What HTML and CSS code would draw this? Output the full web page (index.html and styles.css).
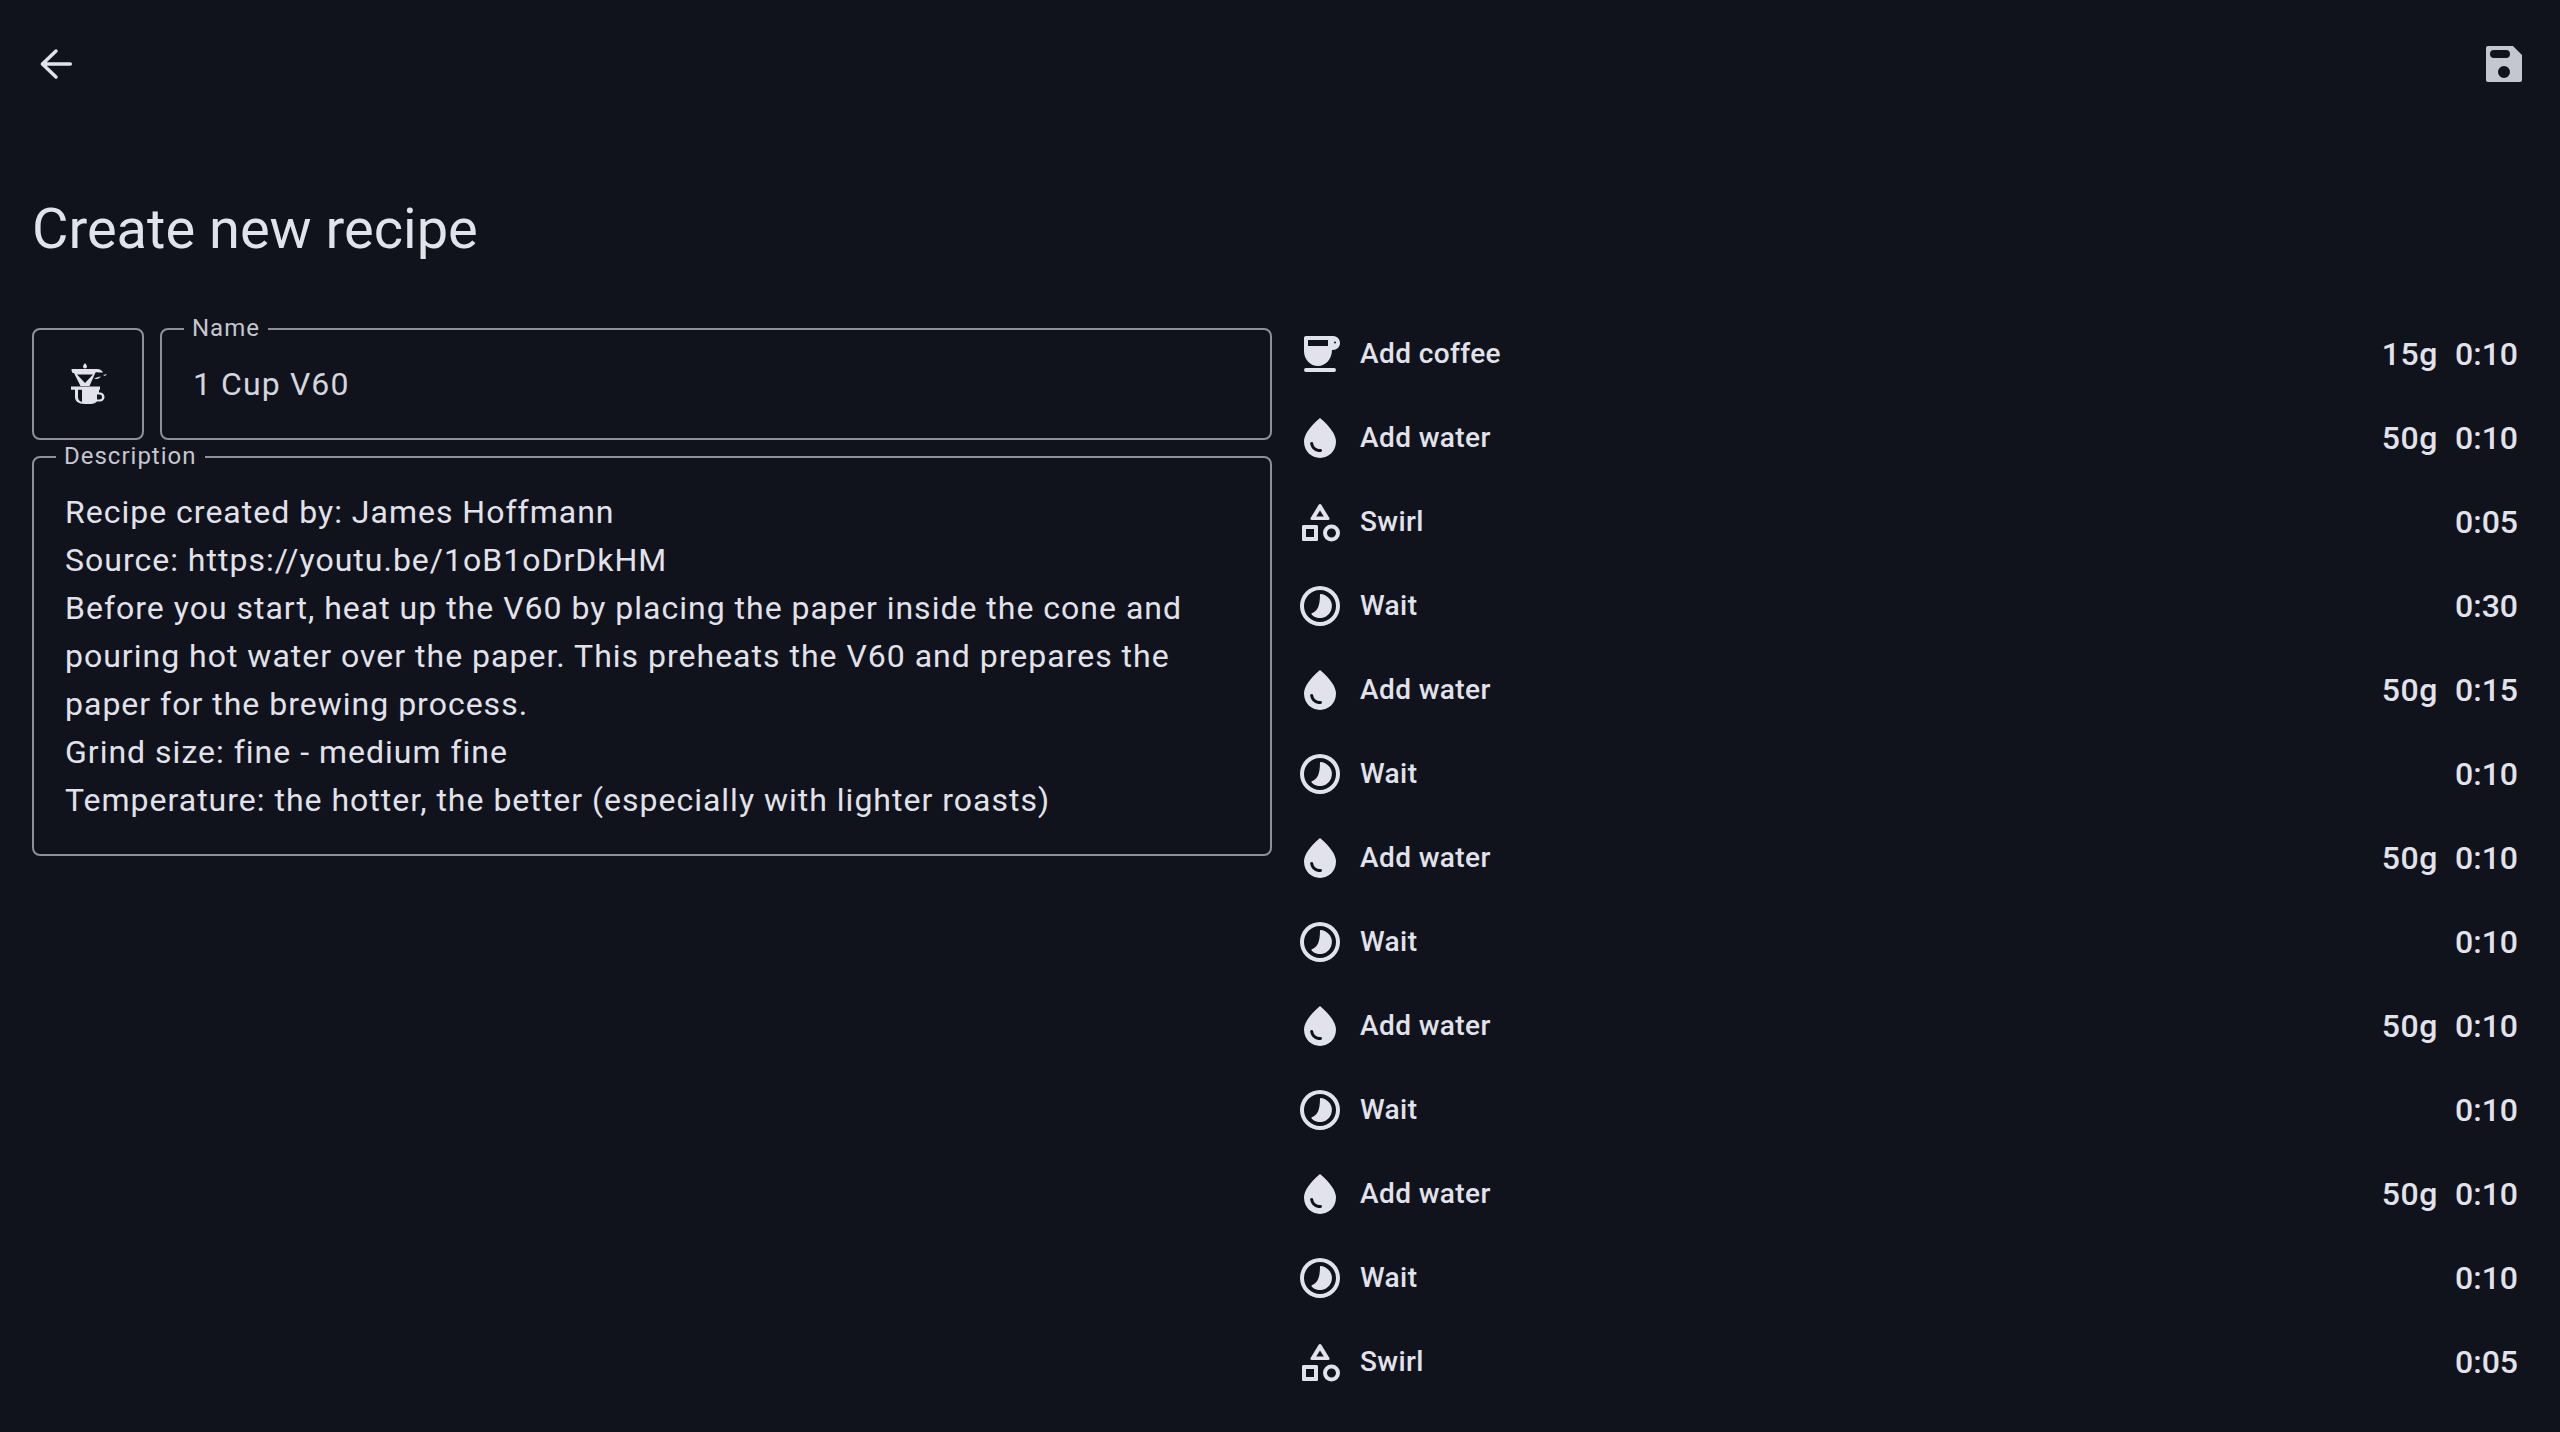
FILE: index.html
```html
<!DOCTYPE html>
<html lang="en">
<head>
<meta charset="utf-8">
<title>Create new recipe</title>
<link rel="stylesheet" href="styles.css">
</head>
<body>
<svg class="defs" width="0" height="0" aria-hidden="true">
  <defs>
    <symbol id="i-coffee" viewBox="0 0 24 24"><path fill-rule="evenodd" d="M5 3H18.500C20.430 3 22 4.570 22 6.500S20.430 10 18.500 10H18C18 14.500 14.800 18 11 18S4 14.500 4 10.700V4C4 3.450 4.450 3 5 3ZM6 5V8H16V5ZM19.500 5.700a.5.5 0 1 0 0 1a.5.5 0 0 0 0-1ZM5 19H19a1 1 0 0 1 0 2H5a1 1 0 0 1 0-2Z"/></symbol>
    <symbol id="i-water" viewBox="0 0 24 24"><path fill-rule="evenodd" d="M12 2c-5.330 4.550-8 8.480-8 11.800 0 4.980 3.800 8.200 8 8.200s8-3.220 8-8.200c0-3.320-2.670-7.250-8-11.800zM7.830 14c.37 0 .67.26.74.62.41 2.220 2.280 2.980 3.640 2.870.43-.02.79.32.79.75 0 .4-.32.73-.72.75-2.130.13-4.620-1.090-5.190-4.120-.08-.45.28-.87.74-.87z"/></symbol>
    <symbol id="i-swirl" viewBox="0 0 24 24"><path fill-rule="evenodd" d="M11.400 3.300c.3-.45.9-.45 1.200 0L16.700 10c.3.5 0 1-.6 1H7.900c-.6 0-.9-.5-.6-1ZM12 6.300 10.100 9.300h3.800ZM3.800 13.500H10.200c.45 0 .8.350.8.800V20.700c0 .45-.35.8-.8.8H3.800c-.45 0-.8-.35-.8-.8V14.300c0-.45.35-.8.8-.8ZM5 15.500V19.500H9V15.500ZM17.750 13.250a4.250 4.250 0 1 1 0 8.500a4.250 4.250 0 0 1 0-8.500ZM17.750 15.250a2.250 2.250 0 1 0 0 4.500a2.250 2.250 0 0 0 0-4.500Z"/></symbol>
    <symbol id="i-wait" viewBox="0 0 24 24"><path fill-rule="evenodd" d="M12 2a10 10 0 1 1 0 20a10 10 0 0 1 0-20ZM12 4a8 8 0 1 0 0 16a8 8 0 0 0 0-16Z"/><path d="M12 6A6 6 0 1 1 8 16.500C7.600 16.100 7.700 15.700 8.100 15.500C10.500 14.500 12 12.500 12 6Z"/></symbol>
  </defs>
</svg>
<main class="page">
  <header class="toolbar">
    <svg class="back" viewBox="0 0 24 24" aria-label="Back"><path d="M19.150 12H5.200M12 5.500 5.200 12 12 18.500"/></svg>
    <svg class="save" viewBox="0 0 24 24" aria-label="Save"><path fill-rule="evenodd" d="M4 3H16.500L21 7.500V20a1 1 0 0 1-1 1H4a1 1 0 0 1-1-1V4a1 1 0 0 1 1-1ZM7 5a2 2 0 0 0 0 4h6a2 2 0 0 0 0-4ZM12 13a3 3 0 1 0 0 6a3 3 0 0 0 0-6Z"/></svg>
  </header>
  <h1 class="title">Create new recipe</h1>
  <div class="columns">
    <section class="form">
      <div class="top-row">
        <div class="method">
          <svg viewBox="0 0 40 42" aria-hidden="true"><path d="M17 0c1.500 2 2 2.800 2 3.500a2 2 0 0 1-4 0c0-.7.5-1.500 2-3.500Z"/><path fill-rule="evenodd" d="M3.500 6H29c3 0 5 1.500 6 3.500H30.500c-1-.5-2-.5-3 0L21.500 23H12.500L6 10H5C4 10 3.500 8 3.500 6ZM9 11.500 17 20l8-8.500Z"/><path d="M26 16c2-1.500 5-2.500 7-2.500c-1.500 1.800-4 3-7 2.500ZM35 12l4-1-2 2Z"/><path fill-rule="evenodd" d="M3 23.500H32V26.700H31V29.500H32a4.500 4.500 0 0 1 0 9H29C27.500 40.100 25.500 41 23 41H17C10 41 7 38 7 34V26.700H3ZM10 26.700V34C10 36.500 11.500 38.500 14 39V26.700ZM29 31.500V36.500H31.500a2.500 2.500 0 0 0 0-5Z"/></svg>
        </div>
        <fieldset class="field name">
          <legend>Name</legend>
          <div class="value">1 Cup V60</div>
        </fieldset>
      </div>
      <fieldset class="field desc">
        <legend>Description</legend>
        <div class="desc-body">
          <p>Recipe created by: James Hoffmann</p>
          <p>Source: https://youtu.be/1oB1oDrDkHM</p>
          <p>Before you start, heat up the V60 by placing the paper inside the cone and pouring hot water over the paper. This preheats the V60 and prepares the paper for the brewing process.</p>
          <p>Grind size: fine - medium fine</p>
          <p>Temperature: the hotter, the better (especially with lighter roasts)</p>
        </div>
      </fieldset>
    </section>
    <ol class="steps">
      <li class="step"><svg class="ico"><use href="#i-coffee"/></svg><span class="label">Add coffee</span><span class="grams">15g</span><span class="time">0:10</span></li>
      <li class="step"><svg class="ico"><use href="#i-water"/></svg><span class="label">Add water</span><span class="grams">50g</span><span class="time">0:10</span></li>
      <li class="step"><svg class="ico"><use href="#i-swirl"/></svg><span class="label">Swirl</span><span class="time">0:05</span></li>
      <li class="step"><svg class="ico"><use href="#i-wait"/></svg><span class="label">Wait</span><span class="time">0:30</span></li>
      <li class="step"><svg class="ico"><use href="#i-water"/></svg><span class="label">Add water</span><span class="grams">50g</span><span class="time">0:15</span></li>
      <li class="step"><svg class="ico"><use href="#i-wait"/></svg><span class="label">Wait</span><span class="time">0:10</span></li>
      <li class="step"><svg class="ico"><use href="#i-water"/></svg><span class="label">Add water</span><span class="grams">50g</span><span class="time">0:10</span></li>
      <li class="step"><svg class="ico"><use href="#i-wait"/></svg><span class="label">Wait</span><span class="time">0:10</span></li>
      <li class="step"><svg class="ico"><use href="#i-water"/></svg><span class="label">Add water</span><span class="grams">50g</span><span class="time">0:10</span></li>
      <li class="step"><svg class="ico"><use href="#i-wait"/></svg><span class="label">Wait</span><span class="time">0:10</span></li>
      <li class="step"><svg class="ico"><use href="#i-water"/></svg><span class="label">Add water</span><span class="grams">50g</span><span class="time">0:10</span></li>
      <li class="step"><svg class="ico"><use href="#i-wait"/></svg><span class="label">Wait</span><span class="time">0:10</span></li>
      <li class="step"><svg class="ico"><use href="#i-swirl"/></svg><span class="label">Swirl</span><span class="time">0:05</span></li>
    </ol>
  </div>
</main>
</body>
</html>
```
FILE: styles.css
```css
* { box-sizing: border-box; }
html, body { margin: 0; height: 100%; }
body {
  background: #10131b;
  color: #e1e2eb;
  font-family: Roboto, "Noto Sans", sans-serif;
  overflow: hidden;
}
.defs { position: absolute; }
.page { height: 1432px; padding: 0 32px; display: flex; flex-direction: column; }
.toolbar { height: 128px; display: flex; justify-content: space-between; align-items: center; flex: none; }
.back { width: 48px; height: 48px; fill: none; stroke: #e1e2eb; stroke-width: 1.750; stroke-linecap: round; stroke-linejoin: round; }
.save { width: 48px; height: 48px; fill: #c4c6d0; }
.title { margin: 51px 0 33px; height: 100px; font-size: 56px; line-height: 100px; font-weight: 400; flex: none; }
.columns { display: flex; gap: 24px; flex: 1; min-height: 0; }
.form { width: 1240px; flex: none; display: flex; flex-direction: column; gap: 16px; padding-top: 16px; }
.top-row { display: flex; gap: 16px; }
.method { width: 112px; height: 112px; border: 2px solid #8e9099; border-radius: 8px; display: flex; align-items: center; justify-content: center; flex: none; }
.method svg { width: 40px; height: 42px; fill: #e1e2eb; }
.field { margin: 0; padding: 0; border: 2px solid #8e9099; border-radius: 8px; min-width: 0; }
.field legend { margin-left: 22px; padding: 0 8px; height: 24px; font-size: 24px; line-height: 22px; letter-spacing: 1px; color: #c4c6d0; }
.name { flex: 1; margin-top: -11px; height: 123px; }
.value { padding: 0 31px; font-size: 32px; line-height: 48px; margin-top: 19px; letter-spacing: 1.100px; color: #d4d5df; }
.desc { margin-top: -11px; }
.desc-body { padding: 19px 30px 30px 31px; }
.desc-body p { margin: 0; font-size: 32px; line-height: 48px; letter-spacing: 1px; color: #e1e2eb; }
.steps { list-style: none; margin: 0; padding: 0; flex: 1; display: flex; flex-direction: column; }
.step { height: 84px; display: flex; align-items: center; flex: none; font-size: 28px; font-weight: 500; }
.ico { width: 48px; height: 48px; fill: #e1e2eb; margin-right: 16px; flex: none; }
.label { flex: 1; letter-spacing: .4px; padding-bottom: 2px; }
.grams { font-size: 32px; margin-right: 17px; letter-spacing: .6px; }
.time { font-size: 32px; margin-right: 10px; }
```
